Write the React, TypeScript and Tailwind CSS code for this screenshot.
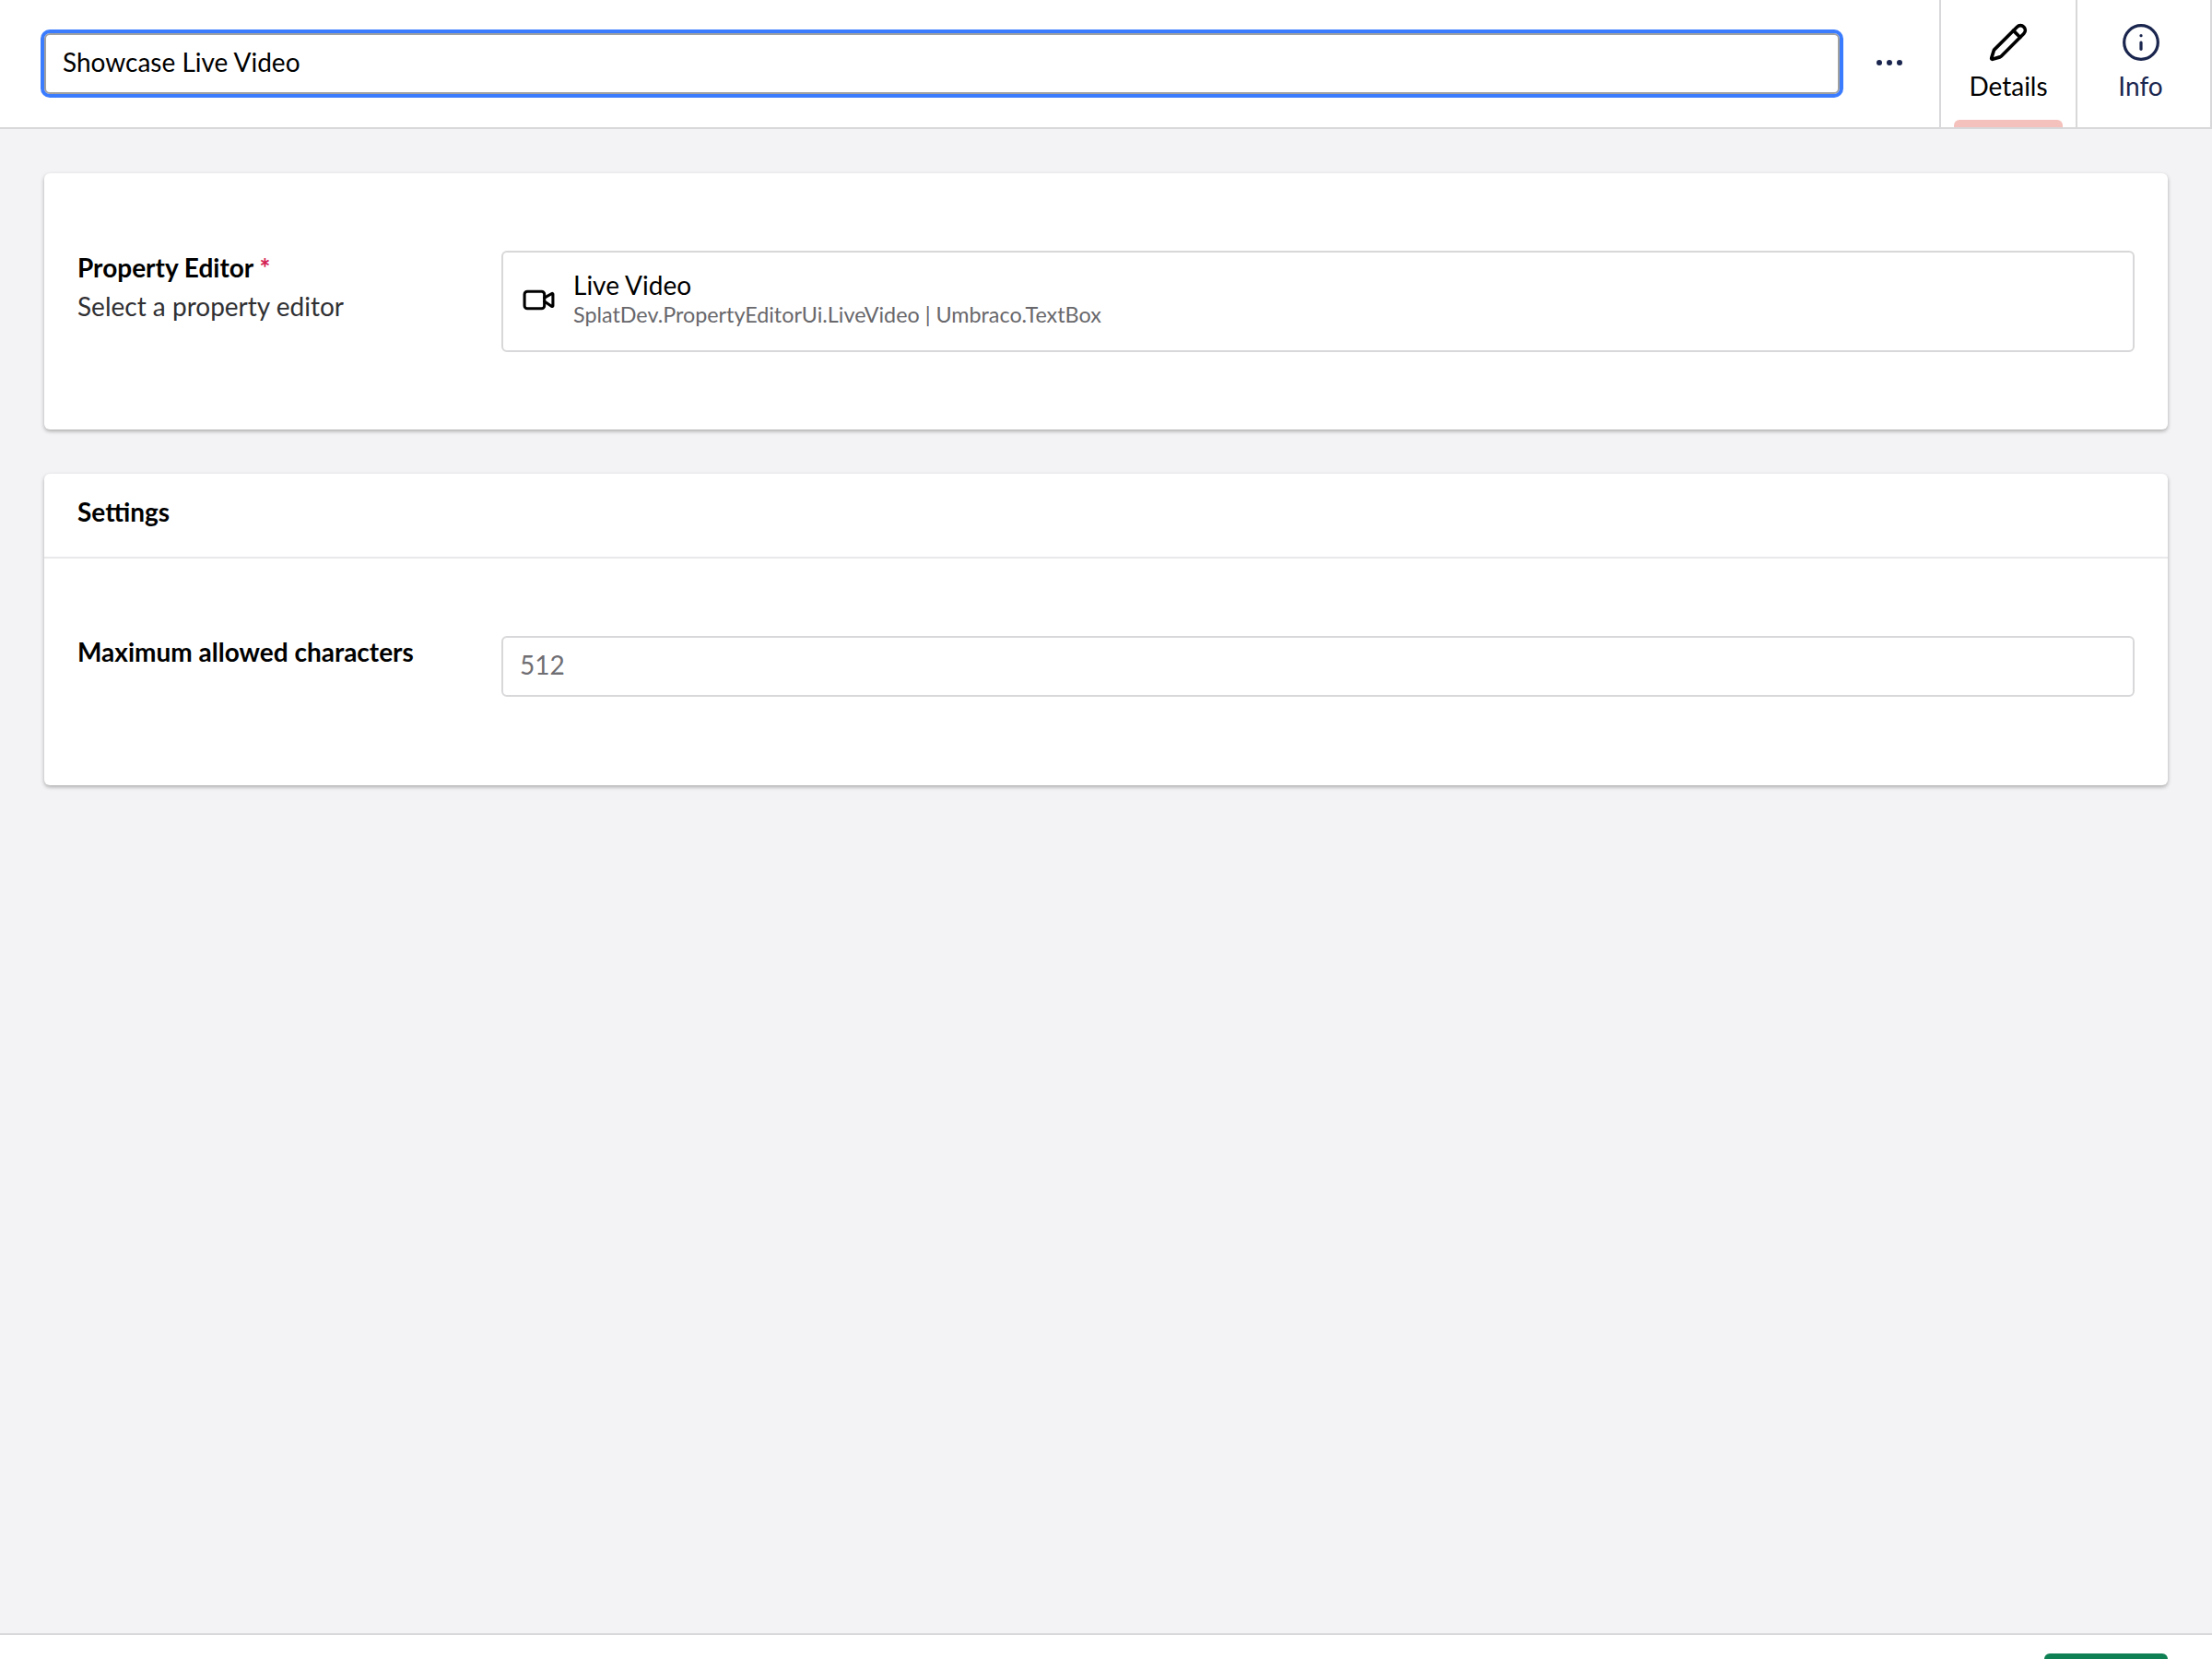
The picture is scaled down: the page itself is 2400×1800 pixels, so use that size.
import React from 'react';
import { Pencil, Info, Video } from 'lucide-react';

const App: React.FC = () => {
  return (
    <div className="h-screen flex flex-col overflow-hidden bg-[#f3f3f5] font-['Lato',sans-serif] text-black">
      {/* Header */}
      <header className="h-[140px] shrink-0 flex bg-white border-b-2 border-[#d8d7d9]">
        <div className="flex-1 flex items-center pl-12">
          <input
            defaultValue="Showcase Live Video"
            className="flex-1 h-[66px] px-[18px] pb-[4px] text-[28px] text-black bg-white rounded-[6px] border-2 border-[#a1a1a1] outline-4 outline-[#3b7cff]"
          />
        </div>
        <div className="w-[108px] flex items-center justify-center gap-[5px] pb-[2px]">
          <span className="w-[6px] h-[6px] rounded-full bg-[#1b264f]" />
          <span className="w-[6px] h-[6px] rounded-full bg-[#1b264f]" />
          <span className="w-[6px] h-[6px] rounded-full bg-[#1b264f]" />
        </div>
        <div className="relative w-[148px] border-l-2 border-[#d8d7d9] flex flex-col items-center pt-[24px]">
          <Pencil size={44} strokeWidth={2} className="text-black" />
          <span className="text-[28px] leading-[36px] mt-[7px]">Details</span>
          <div className="absolute bottom-0 left-[14px] w-[118px] h-2 rounded-t-[6px] bg-[#f5c1bc]" />
        </div>
        <div className="w-[148px] border-x-2 border-[#d8d7d9] flex flex-col items-center pt-[24px] pr-[7px] text-[#1b264f]">
          <Info size={44} strokeWidth={1.75} />
          <span className="text-[28px] leading-[36px] mt-[7px]">Info</span>
        </div>
      </header>

      {/* Content */}
      <main className="flex-1 flex flex-col gap-12 p-12">
        <section className="bg-white rounded-[6px] shadow-[0_2px_4px_rgba(0,0,0,0.3)] pl-9 pr-[36px] py-[84px]">
          <div className="grid grid-cols-[460px_1fr]">
            <div className="text-[28px] leading-[42px] -mt-[3px]">
              <div className="font-bold">
                Property Editor <span className="text-[#d42054]">*</span>
              </div>
              <div className="text-[#303033]">Select a property editor</div>
            </div>
            <div className="h-[110px] flex items-center gap-[19px] pl-[20px] rounded-[6px] border-2 border-[#d8d7d9]">
              <Video size={37} strokeWidth={2} className="mb-[3px]" />
              <div className="pb-[6px]">
                <div className="text-[28px] leading-[34px]">Live Video</div>
                <div className="text-[23.33px] leading-[30px] text-[#68676b]">SplatDev.PropertyEditorUi.LiveVideo | Umbraco.TextBox</div>
              </div>
            </div>
          </div>
        </section>

        <section className="bg-white rounded-[6px] shadow-[0_2px_4px_rgba(0,0,0,0.3)]">
          <div className="h-[92px] flex items-center px-9 pb-[8px] border-b-2 border-[#e9e9eb] text-[28px] font-bold">Settings</div>
          <div className="grid grid-cols-[460px_1fr] pl-9 pr-[36px] pt-[84px] pb-[96px]">
            <div className="text-[28px] leading-[40px] font-bold -mt-[3px]">Maximum allowed characters</div>
            <input
              placeholder="512"
              className="h-[66px] px-[18px] pb-[4px] text-[28px] rounded-[6px] border-2 border-[#d8d7d9] placeholder:text-[#6f6e73] outline-none"
            />
          </div>
        </section>
      </main>

      {/* Footer */}
      <footer className="h-[28px] shrink-0 flex justify-end overflow-hidden bg-white border-t-2 border-[#d8d7d9] pr-12 pt-5">
        <button className="w-[134px] h-[80px] rounded-[6px] bg-[#0f8054]" />
      </footer>
    </div>
  );
};

export default App;
